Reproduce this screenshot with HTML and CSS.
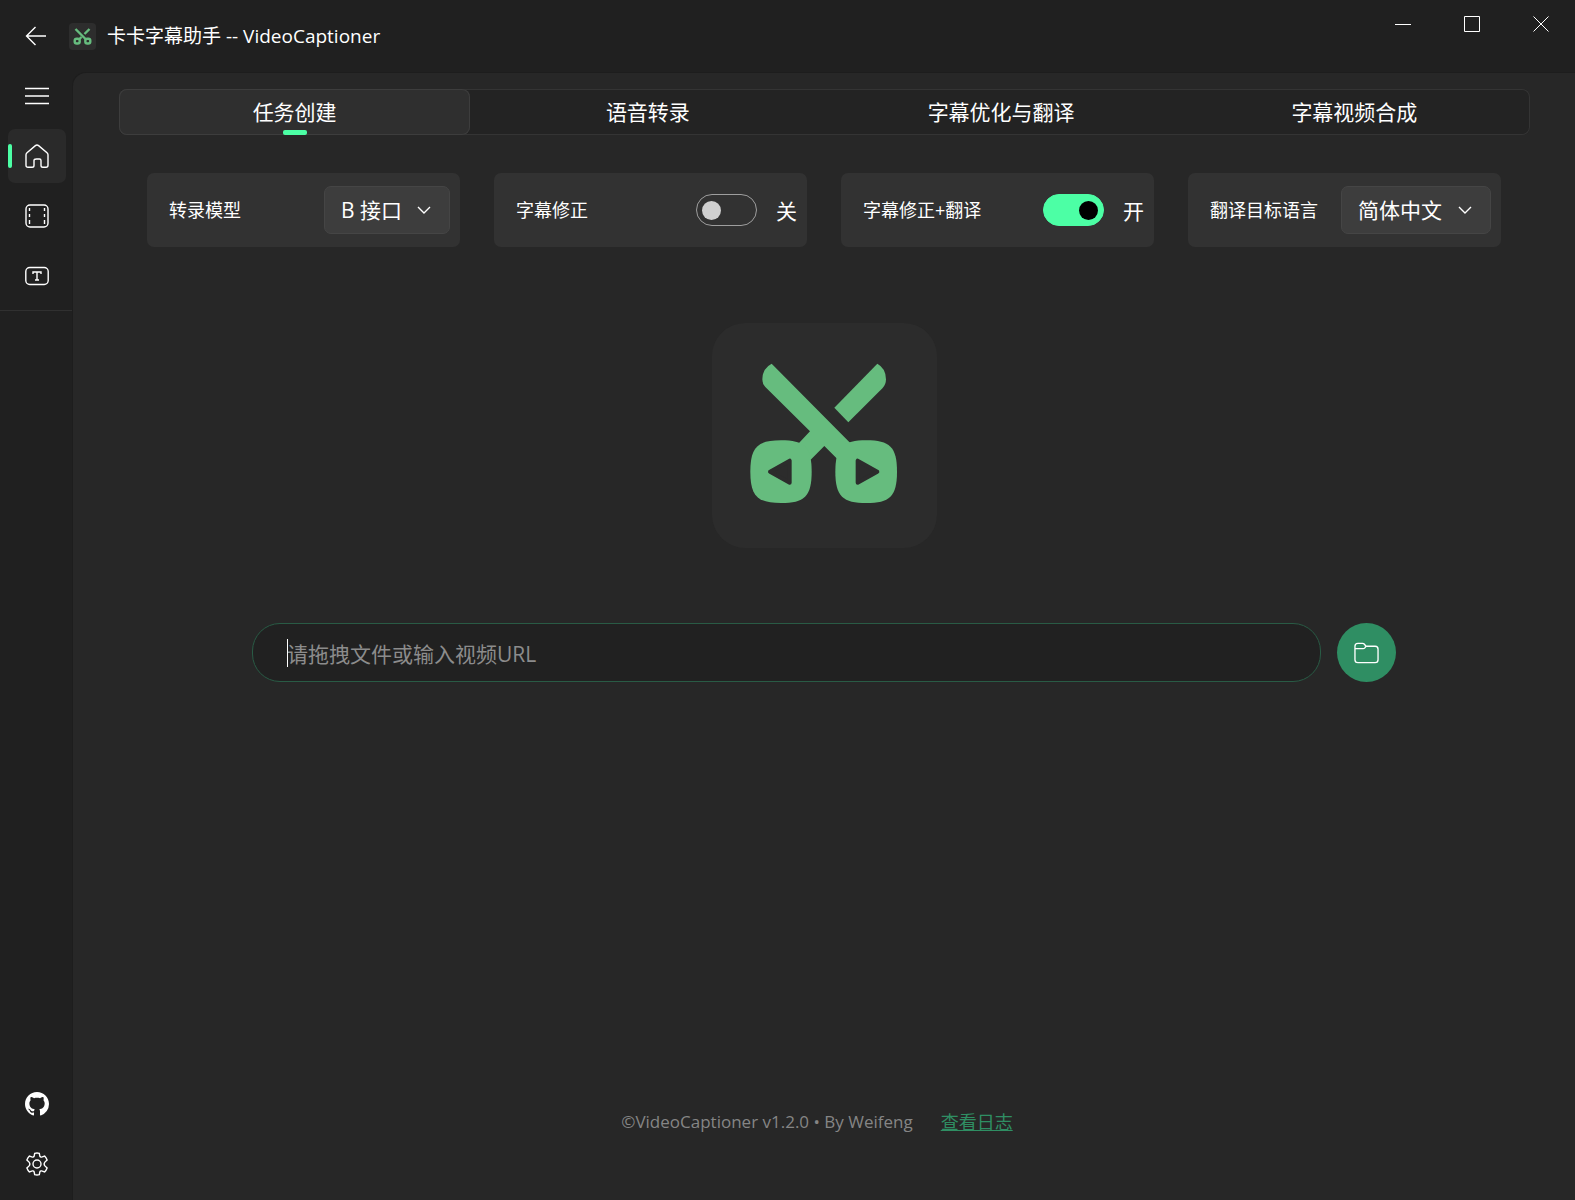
FILE: index.html
```html
<!DOCTYPE html>
<html lang="zh-CN">
<head>
	<meta charset="utf-8">
	<meta name="viewport" content="width=device-width, initial-scale=1">
	<title>卡卡字幕助手 -- VideoCaptioner</title>
	<link rel="stylesheet" href="styles.css">
</head>
<body>
	<header class="titlebar">
		<button class="back" type="button" aria-label="返回">
			<svg width="22" height="20" viewBox="0 0 22 20"><path d="M10.5 1 1.5 10l9 9M1.5 10H21"/></svg>
		</button>
		<svg class="app-icon" width="27" height="27" viewBox="0 0 27 27">
			<rect width="27" height="27" rx="4" fill="#2d2d2d"/>
			<g fill="none" stroke="#66bc7e" stroke-width="2.4">
				<path d="M6.5 6 17 16.5M20.500 6 15.500 11M12.500 14 10 16.500"/>
				<rect x="5.700" y="15.700" width="5" height="4.800" rx="2"/>
				<rect x="16.300" y="15.700" width="5" height="4.800" rx="2"/>
			</g>
		</svg>
		<h1 class="title">卡卡字幕助手 -- VideoCaptioner</h1>
		<div class="window-controls">
			<button type="button" aria-label="最小化">
				<svg width="16" height="16" viewBox="0 0 16 16"><path d="M0 8.500h16"/></svg>
			</button>
			<button type="button" aria-label="最大化">
				<svg width="16" height="16" viewBox="0 0 16 16"><path d="M.5.5h15v15H.5z"/></svg>
			</button>
			<button type="button" aria-label="关闭">
				<svg width="16" height="16" viewBox="0 0 16 16"><path d="m.5.5 15 15m0-15-15 15"/></svg>
			</button>
		</div>
	</header>

	<nav class="sidebar">
		<button class="nav-item" type="button" aria-label="菜单">
			<svg width="24" height="24" viewBox="0 0 24 24"><path d="M0 4.500h24M0 12h24M0 19.500h24"/></svg>
		</button>
		<button class="nav-item active" type="button" aria-label="主页">
			<svg width="24" height="24" viewBox="0 0 24 24"><path d="M1 10.800q0-1.200 1-2.100l8.400-7.100q1.600-1.200 3.200 0L22 8.700q1 .9 1 2.100v10.400q0 2-2 2h-3.200q-1.800 0-1.800-1.800V16.500q0-1.500-1.500-1.500h-3Q9 15 9 16.500v4.900q0 1.800-1.800 1.800H3q-2 0-2-2z"/></svg>
		</button>
		<button class="nav-item" type="button" aria-label="视频">
			<svg width="24" height="24" viewBox="0 0 24 24"><rect x="1" y="1" width="22" height="22" rx="4"/><path d="M4.500 4v3m0 3v3m0 3v4M19.500 4v3m0 3v3m0 3v4"/></svg>
		</button>
		<button class="nav-item" type="button" aria-label="字幕样式">
			<svg width="24" height="24" viewBox="0 0 24 24"><rect x=".8" y="3.500" width="22.400" height="17" rx="4"/><path d="M8 10V8h8v2M12 8v8m-2 0h4"/></svg>
		</button>
		<hr>
		<div class="sidebar-bottom">
			<a class="nav-item" href="#" aria-label="GitHub">
				<svg class="filled" width="24" height="24" viewBox="0 0 16 16"><path d="M8 0C3.580 0 0 3.580 0 8c0 3.540 2.290 6.530 5.470 7.590.4.070.55-.17.55-.38 0-.19-.01-.82-.01-1.490-2.010.37-2.530-.49-2.690-.94-.09-.23-.48-.94-.82-1.130-.28-.15-.68-.52-.01-.53.63-.01 1.080.58 1.230.82.72 1.210 1.870.87 2.330.66.07-.52.28-.87.51-1.070-1.780-.2-3.640-.89-3.640-3.950 0-.87.31-1.590.82-2.150-.08-.2-.36-1.020.08-2.120 0 0 .67-.21 2.200.82.64-.18 1.320-.27 2-.27s1.360.09 2 .27c1.530-1.040 2.200-.82 2.200-.82.44 1.100.16 1.920.08 2.120.51.56.82 1.270.82 2.150 0 3.070-1.870 3.750-3.650 3.950.29.25.54.73.54 1.480 0 1.070-.01 1.930-.01 2.200 0 .21.15.46.55.38A8 8 0 0 0 16 8c0-4.420-3.580-8-8-8"/></svg>
			</a>
			<button class="nav-item" type="button" aria-label="设置">
				<svg width="24" height="24" viewBox="0 0 24 24"><circle cx="12" cy="12" r="4"/><path d="M9.700 1.400Q12 .7 14.300 1.400L14.900 4.300Q15.200 5.300 16.600 5.100L19.600 4.100Q21.300 5.700 22.100 8L19.900 10.100Q18.400 12 19.900 13.900L22.100 16Q21.300 18.300 19.600 19.900L16.600 18.900Q15.200 18.700 14.900 19.700L14.300 22.600Q12 23.300 9.700 22.600L9.100 19.700Q8.800 18.700 7.400 18.900L4.400 19.900Q2.700 18.300 1.900 16L4.100 13.900Q5.600 12 4.100 10.100L1.900 8Q2.700 5.700 4.400 4.100L7.400 5.100Q8.800 5.300 9.100 4.300Z"/></svg>
			</button>
		</div>
	</nav>

	<main class="content">
		<div class="tabs">
			<button class="tab active" type="button">任务创建</button>
			<button class="tab" type="button">语音转录</button>
			<button class="tab" type="button">字幕优化与翻译</button>
			<button class="tab" type="button">字幕视频合成</button>
		</div>

		<div class="options">
			<div class="card">
				<label for="model">转录模型</label>
				<div class="select">
					<select id="model">
						<option>B 接口</option>
					</select>
					<svg width="14" height="14" viewBox="0 0 14 14"><path d="m1 4 6 6 6-6"/></svg>
				</div>
			</div>
			<div class="card">
				<label for="correct">字幕修正</label>
				<div class="switch">
					<input id="correct" type="checkbox">
					<span>关</span>
				</div>
			</div>
			<div class="card">
				<label for="translate">字幕修正+翻译</label>
				<div class="switch">
					<input id="translate" type="checkbox" checked>
					<span>开</span>
				</div>
			</div>
			<div class="card">
				<label for="language">翻译目标语言</label>
				<div class="select wide">
					<select id="language">
						<option>简体中文</option>
					</select>
					<svg width="14" height="14" viewBox="0 0 14 14"><path d="m1 4 6 6 6-6"/></svg>
				</div>
			</div>
		</div>

		<svg class="logo" width="225" height="225" viewBox="0 0 675 675">
			<rect width="675" height="675" rx="100" fill="#2c2c2c"/>
			<g fill="#66bc7e">
				<path d="M179 122 417 362 376 408 337 369 296 410 256 365 294 325 160 192Q151 183 151 169Q151 136 179 122Z"/>
				<path d="M496 122Q522 136 522 169Q522 184 512 195L409 298 367 254Z"/>
				<path d="M115 446C115 372 137 352 207 352S299 372 299 446 277 540 207 540 115 520 115 446Z"/>
				<path d="M370 446C370 372 393 352 463 352S555 372 555 446 533 540 463 540 370 520 370 446Z"/>
			</g>
			<g fill="#2c2c2c" stroke="#2c2c2c" stroke-width="12" stroke-linejoin="round">
				<path d="M174 446 233 413V479Z"/>
				<path d="M496 446 437 413V479Z"/>
			</g>
		</svg>

		<form class="search">
			<div class="field">
				<input type="text" placeholder="请拖拽文件或输入视频URL" aria-label="请拖拽文件或输入视频URL">
				<span class="caret"></span>
			</div>
			<button type="button" aria-label="选择文件">
				<svg width="25" height="24" viewBox="0 0 26 24"><path d="M1 5q0-3 3-3h5q1 0 1.600.6L12.500 5H22q3 0 3 3v11q0 3-3 3H4q-3 0-3-3zM1 7.500h8.500q1 0 1.500-.6L12.500 5"/></svg>
			</button>
		</form>

		<footer class="footer">
			<span>©VideoCaptioner v1.2.0 • By Weifeng</span>
			<a href="#">查看日志</a>
		</footer>
	</main>
</body>
</html>
```
FILE: styles.css
```css
*{
	box-sizing: border-box;
	margin: 0;
}

body{
	display: grid;
	grid-template-columns: 72px 1fr;
	grid-template-rows: 72px 1fr;
	min-height: 100vh;
	background-color: #202020;
	color: #FFF;
	font-family: 'Open Sans', 'Noto Sans CJK SC', sans-serif;
	font-size: 18px;
}

button, input, select{
	font: inherit;
	color: inherit;
}

button{
	display: flex;
	align-items: center;
	justify-content: center;
	padding: 0;
	border: none;
	background: none;
}

svg{
	display: block;
	fill: none;
	stroke: #FFF;
	stroke-width: 1.4;
}

svg.filled{
	fill: #FFF;
	stroke: none;
}

/* title bar */

.titlebar{
	grid-column: 1 / 3;
	display: flex;
	align-items: center;
	padding-left: 25px;
}

.app-icon{
	margin: 0 11px 0 22px;
	stroke: none;
}

.title{
	font-size: 19px;
	font-weight: 400;
	line-height: 28px;
}

.window-controls{
	display: flex;
	align-self: flex-start;
	margin-left: auto;
}

.window-controls button{
	width: 69px;
	height: 48px;
}

.window-controls svg{
	stroke-width: 1;
}

/* sidebar */

.sidebar{
	display: flex;
	flex-direction: column;
	gap: 6px;
	padding-bottom: 9px;
	margin-top: -3px;
}

.nav-item{
	position: relative;
	display: flex;
	align-items: center;
	justify-content: center;
	width: 58px;
	height: 54px;
	margin-left: 8px;
	border-radius: 7px;
}

.nav-item.active{
	background-color: #2A2A2A;
}

.nav-item.active::before{
	content: "";
	position: absolute;
	left: 0;
	width: 4px;
	height: 24px;
	border-radius: 2px;
	background-color: #4CFFA5;
}

.sidebar hr{
	width: 100%;
	margin-top: 1px;
	border: none;
	border-top: 1px solid #303030;
}

.sidebar-bottom{
	display: flex;
	flex-direction: column;
	gap: 6px;
	margin-top: auto;
}

/* content */

.content{
	display: flex;
	flex-direction: column;
	align-items: center;
	padding: 16px 45px 62px 46px;
	border-top: 1px solid #1D1D1D;
	border-left: 1px solid #1D1D1D;
	border-top-left-radius: 14px;
	background-color: #272727;
}

.tabs{
	display: flex;
	gap: 2px;
	width: 100%;
	height: 46px;
	border-radius: 8px;
	background-color: #232323;
	box-shadow: inset 0 0 0 1px #343434;
}

.tab{
	position: relative;
	flex: 1;
	padding-bottom: 2px;
	border-radius: 8px;
	font-size: 21px;
}

.tab.active{
	background-color: #2F2F2F;
	box-shadow: inset 0 0 0 1px #3D3D3D;
}

.tab.active::after{
	content: "";
	position: absolute;
	bottom: 0;
	width: 24px;
	height: 5px;
	border-radius: 2px;
	background-color: #4CFFA5;
}

.options{
	display: grid;
	grid-template-columns: repeat(4, 1fr);
	gap: 34px;
	width: 100%;
	padding: 38px 29px 0 28px;
}

.card{
	display: flex;
	align-items: center;
	justify-content: space-between;
	height: 74px;
	padding: 0 10px 0 22px;
	border-radius: 7px;
	background-color: #323232;
}

.card label{
	padding-bottom: 2px;
}

.select{
	position: relative;
	width: 126px;
}

.select.wide{
	width: 150px;
}

.select select{
	appearance: none;
	width: 100%;
	height: 48px;
	padding: 0 16px;
	border: 1px solid #454545;
	border-radius: 7px;
	background-color: #3D3D3D;
	font-size: 21px;
}

.select svg{
	position: absolute;
	top: 17px;
	right: 19px;
	pointer-events: none;
}

.switch{
	display: flex;
	align-items: center;
	gap: 19px;
	font-size: 21px;
}

.switch input{
	appearance: none;
	display: flex;
	align-items: center;
	width: 61px;
	height: 32px;
	padding: 0 5px;
	border: 1px solid #9E9E9E;
	border-radius: 16px;
}

.switch input::before{
	content: "";
	width: 19px;
	height: 19px;
	border-radius: 50%;
	background-color: #D0D0D0;
}

.switch input:checked{
	justify-content: flex-end;
	border-color: #4CFFA5;
	background-color: #4CFFA5;
}

.switch input:checked::before{
	background-color: #000;
}

.logo{
	margin: 76px 0 75px;
	stroke: none;
}

.search{
	display: flex;
	gap: 16px;
	width: 100%;
	padding: 0 134px 0 133px;
}

.field{
	position: relative;
	flex: 1;
}

.field input{
	width: 100%;
	height: 59px;
	padding: 2px 34px 0;
	border: 1px solid #295B45;
	border-radius: 28px;
	background-color: #212121;
	font-size: 21px;
	outline: none;
}

.field input::placeholder{
	color: #8C8C8C;
	opacity: 1;
}

.caret{
	position: absolute;
	top: 16px;
	left: 35px;
	width: 1px;
	height: 28px;
	background-color: #FFF;
}

.search button{
	width: 59px;
	height: 59px;
	border-radius: 50%;
	background-color: #2F8E63;
}

.footer{
	display: flex;
	gap: 28px;
	margin-top: auto;
	padding-right: 15px;
	line-height: 32px;
	color: #858585;
}

.footer span{
	font-size: 17px;
}

.footer a{
	color: #2F8E63;
}
```
